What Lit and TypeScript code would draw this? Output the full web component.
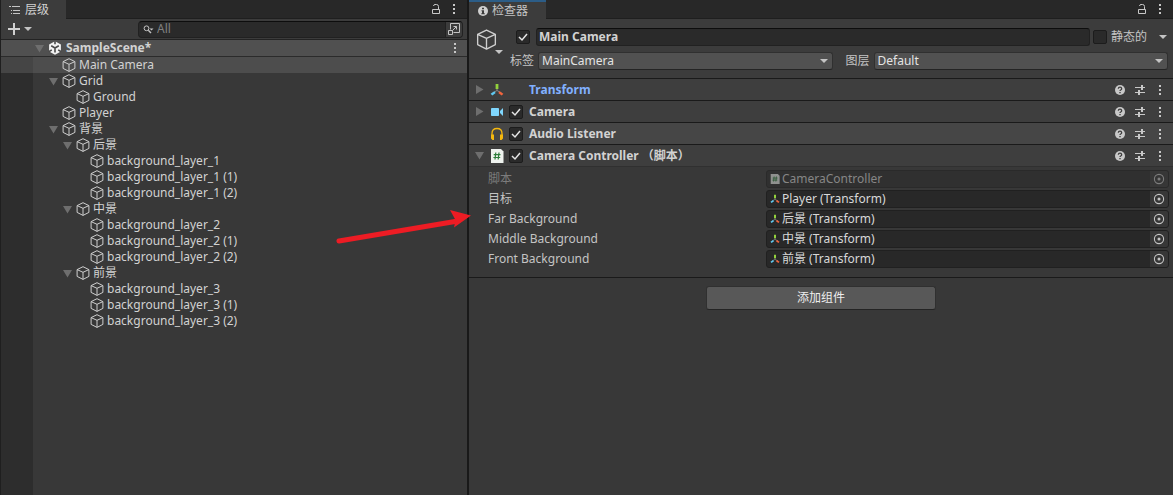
import { LitElement, html, svg, css, nothing } from "lit";
import { customElement, property } from "lit/decorators.js";

const base = css`
  :host {
    display: block;
    font: 12px/16px "Noto Sans", "Noto Sans CJK SC", sans-serif;
    color: #c4c4c4;
  }
  * { box-sizing: border-box; }
  svg { display: block; flex: none; }
  button, input, select {
    font: inherit;
    color: inherit;
    margin: 0;
    padding: 0;
    border: 0;
    background: none;
    min-width: 0;
  }
  .icon-button { display: grid; place-items: center; flex: none; }
  .tab-bar {
    display: flex;
    height: 19px;
    background: #282828;
    border-bottom: 1px solid #1f1f1f;
  }
  .tab {
    display: flex;
    align-items: center;
    height: 19px;
    background: #3c3c3c;
  }
  .tab-tools { display: flex; margin-left: auto; padding-right: 5px; }
  .tab-tools .icon-button { width: 17px; height: 18px; }
`;

const icons = {
  kebab: html`<svg width="4" height="12" viewBox="0 0 4 12" fill="#c8c8c8"><path d="M1 1h2v2H1zM1 5h2v2H1zM1 9h2v2H1z"/></svg>`,
  lock: html`<svg width="9" height="12" viewBox="0 0 9 12" fill="none" stroke="#c8c8c8"><path d="M.500 6.500h7v4h-7zM6.500 6V3.500Q6.500 1.500 4.500 1.500H3Q1.700 1.500 1.500 3"/></svg>`,
  list: html`<svg width="12" height="10" viewBox="0 0 12 10" fill="#c4c4c4"><path d="M3 1h8v1H3zM4 5h7v1H4zM4 8h7v1H4zM0 1h2v1H0zM2 5h1v1H2zM2 8h1v1H2z"/></svg>`,
  info: html`<svg width="10" height="10" viewBox="0 0 10 10"><circle cx="5" cy="5" r="5" fill="#d0d0d0"/><path d="M4 1.700h2v1.500H4zM3.500 4.200H6v3h.800v1H3.300v-1H4V5.200h-.500z" fill="#3c3c3c"/></svg>`,
  plus: html`<svg width="12" height="12" viewBox="0 0 12 12" fill="#d0d0d0"><path d="M5 0h2v5h5v2H7v5H5V7H0V5h5z"/></svg>`,
  caret: html`<svg width="8" height="4" viewBox="0 0 8 4" fill="#c4c4c4"><path d="M0 0h8L4 4z"/></svg>`,
  search: html`<svg width="11" height="9" viewBox="0 0 11 9" fill="none" stroke="#c4c4c4"><circle cx="3.500" cy="3.300" r="2.400"/><path d="M5.300 5.200 8 8" stroke-width="1.400"/><path d="M6.500 3.500h4L8.500 5.500z" fill="#c4c4c4" stroke="none"/></svg>`,
  popout: html`<svg width="14" height="14" viewBox="0 0 14 14" fill="none" stroke="#c4c4c4"><path d="M3.500 7.500V1.500h9v9H6.500M1.500 8.500h4v4h-4zM5.500 8.500 9.500 4.500M6.500 4.500h3v3"/></svg>`,
  help: html`<svg width="10" height="10" viewBox="0 0 10 10"><circle cx="5" cy="5" r="5" fill="#c8c8c8"/><path d="M3.300 3.800Q3.400 2.200 5 2.200T6.700 3.700Q6.700 4.500 5.700 5 5 5.400 5 6.100" fill="none" stroke="#3e3e3e" stroke-width="1.300"/><path d="M4.300 7h1.400v1.300H4.300z" fill="#3e3e3e"/></svg>`,
  sliders: html`<svg width="10" height="10" viewBox="0 0 10 10" fill="#c8c8c8"><path d="M0 2h6V0h2v2h2v1H8v2H6V3H0zM0 7h3V5h2v2h5v1H5v2H3V8H0z"/></svg>`,
  target: html`<svg width="12" height="12" viewBox="0 0 12 12"><circle cx="6" cy="6" r="4.600" fill="none" stroke="#c4c4c4" stroke-width="1.100"/><circle cx="6" cy="6" r="1.500" fill="#c4c4c4"/></svg>`,
  unity: html`<svg width="14" height="14" viewBox="0 0 14 14"><path d="M7 .300 12.900 3.600v6.800L7 13.700 1.100 10.400V3.600z" fill="#f2f2f2"/><path d="M7 7V11.500M7 7 3.200 4.800M7 7l3.800-2.200" stroke="#4a4a4a" stroke-width="1.600"/><path d="M7 0v3.300M.800 10.700l3-1.800M13.200 10.700l-3-1.800" stroke="#4a4a4a" stroke-width="1.600"/></svg>`,
  camera: html`<svg width="14" height="14" viewBox="0 0 14 14" fill="#7fd6fd"><rect x="1" y="3" width="8" height="8" rx=".8"/><path d="M10 6 13 3v8l-3-3z"/></svg>`,
  audio: html`<svg width="14" height="14" viewBox="0 0 14 14"><path d="M2 9V6.500Q2 1.500 7 1.500T12 6.500V9" fill="none" stroke="#f5b80f" stroke-width="1.300"/><path d="M1 7.500h3V13H2.500L1 11.500zM13 7.500h-3V13h1.500L13 11.500z" fill="#f5b80f"/></svg>`,
};

const cube = (size: number) => html`
  <svg width=${size} height=${size} viewBox="0 0 14 14" fill="none" stroke="#cfcfcf" stroke-width=${size > 16 ? 0.9 : 1} stroke-linejoin="round">
    <path d="M7 .700 12.900 3.600V10.400L7 13.400 1.100 10.400V3.600zM1.100 3.600 7 6.300l5.900-2.700M7 6.300v7.100"/>
  </svg>`;

const transform = (size: number) => html`
  <svg width=${size} height=${size} viewBox="0 0 14 14">
    <path d="M7 7.500 2.500 10M7 7.500l4.500 2.500M7 7.500V5" stroke="#888" stroke-width="1"/>
    <path d="M5.600 1h2.800v5H5.600z" fill="#92d13c"/>
    <path d="M4.300 8.300 5.700 10 2.300 12.500.600 10.800z" fill="#5fc8f0"/>
    <path d="M9.700 8.300 13.400 10.800 11.700 12.500 8.300 10z" fill="#f2643c"/>
  </svg>`;

const script = (size: number) => html`
  <svg width=${size} height=${size} viewBox="0 0 14 14">
    <path d="M1 0h10l2.500 2.500V14H1z" fill="#eef2ee"/>
    <path d="M5.800 3.500 5 10.500M9 3.500 8.200 10.500M3.700 5.700h6.800M3.400 8.500h6.800" stroke="#2d7d3a" stroke-width="1.200"/>
  </svg>`;

const foldout = (open: boolean) => html`
  <svg width="9" height="9" viewBox="0 0 9 9" fill="#6e6e6e">
    ${open ? svg`<path d="M0 1h9L4.500 8.500z"/>` : svg`<path d="M1 0v9L8.500 4.500z"/>`}
  </svg>`;

interface Node { name: string; level: number; open?: boolean; selected?: boolean }

const nodes: Node[] = [
  { name: "Main Camera", level: 1, selected: true },
  { name: "Grid", level: 1, open: true },
  { name: "Ground", level: 2 },
  { name: "Player", level: 1 },
  { name: "背景", level: 1, open: true },
  { name: "后景", level: 2, open: true },
  { name: "background_layer_1", level: 3 },
  { name: "background_layer_1 (1)", level: 3 },
  { name: "background_layer_1 (2)", level: 3 },
  { name: "中景", level: 2, open: true },
  { name: "background_layer_2", level: 3 },
  { name: "background_layer_2 (1)", level: 3 },
  { name: "background_layer_2 (2)", level: 3 },
  { name: "前景", level: 2, open: true },
  { name: "background_layer_3", level: 3 },
  { name: "background_layer_3 (1)", level: 3 },
  { name: "background_layer_3 (2)", level: 3 },
];

@customElement("hierarchy-panel")
export class HierarchyPanel extends LitElement {
  static styles = [base, css`
    :host {
      display: flex;
      flex-direction: column;
      background: #383838;
      border-left: 1px solid #1f1f1f;
      color: #d2d2d2;
    }
    .tab { padding: 0 17px 0 8px; gap: 4px; }
    .toolbar {
      display: flex;
      align-items: center;
      height: 21px;
      padding-left: 7px;
      padding-right: 4px;
      background: #3c3c3c;
      border-bottom: 1px solid #232323;
    }
    .add { display: flex; align-items: center; gap: 4px; }
    .search {
      display: flex;
      align-items: center;
      flex: 1;
      height: 17px;
      margin-left: 106px;
      border: 1px solid #212121;
      border-top-color: #0d0d0d;
      border-radius: 4px;
      background: #2a2a2a;
      overflow: hidden;
    }
    .search svg { margin-left: 4px; }
    .search input { flex: 1; padding-left: 3px; height: 15px; }
    .search input::placeholder { color: #808080; opacity: 1; }
    .search .icon-button { width: 17px; height: 15px; background: #3c3c3c; border-left: 1px solid #212121; }
    .search .icon-button svg { margin: 0; }
    .tree {
      flex: 1;
      margin: 0;
      padding: 0;
      list-style: none;
      background: linear-gradient(90deg, #2d2d2d 32px, transparent 32px);
    }
    .row { display: flex; align-items: center; height: 16px; padding-right: 10px; }
    .scene {
      height: 17px;
      padding-left: 33px;
      background: #505050;
      border-bottom: 1px solid #2b2b2b;
      font-weight: 700;
    }
    .scene .name { padding-left: 4px; }
    .selected { background: linear-gradient(90deg, #454545 32px, #4d4d4d 32px); }
    .fold { width: 14px; flex: none; display: grid; place-items: center start; padding-left: 1px; }
    .name { padding-left: 3px; white-space: nowrap; }
    .more { margin-left: auto; }
  `];

  render() {
    return html`
      <div class="tab-bar">
        <div class="tab">${icons.list}<span>层级</span></div>
        <div class="tab-tools">
          <button class="icon-button" aria-label="锁定">${icons.lock}</button>
          <button class="icon-button" aria-label="菜单">${icons.kebab}</button>
        </div>
      </div>
      <div class="toolbar">
        <button class="add" aria-label="创建">${icons.plus}${icons.caret}</button>
        <div class="search">
          ${icons.search}
          <input type="text" placeholder="All" aria-label="搜索" />
          <button class="icon-button" aria-label="在窗口中打开">${icons.popout}</button>
        </div>
      </div>
      <div class="row scene">
        <button class="fold" aria-label="折叠">${foldout(true)}</button>
        ${icons.unity}<span class="name">SampleScene*</span>
        <button class="icon-button more" aria-label="场景菜单">${icons.kebab}</button>
      </div>
      <ul class="tree">
        ${nodes.map((n) => html`
          <li class="row ${n.selected ? "selected" : ""}" style="padding-left:${33 + n.level * 14}px">
            ${n.open ? html`<button class="fold" aria-label="折叠">${foldout(true)}</button>` : html`<span class="fold"></span>`}
            ${cube(14)}<span class="name">${n.name}</span>
          </li>`)}
      </ul>`;
  }
}

@customElement("component-header")
export class ComponentHeader extends LitElement {
  @property() label = "";
  @property() kind = "";
  @property() fold = "closed";
  @property({ type: Boolean }) toggle = false;

  static styles = [base, css`
    :host { border-bottom: 1px solid #1a1a1a; background: #3e3e3e; }
    :host([kind="audio"]) { background: #464646; }
    :host([fold="open"]) { border-bottom-color: #303030; }
    .header { display: flex; align-items: center; height: 21px; padding: 0 8px 0 6px; }
    .fold { width: 15px; flex: none; padding: 0; display: grid; place-items: center start; }
    .check { width: 14px; height: 14px; margin: 0 6px 0 5px; flex: none; }
    .title { font-weight: 700; color: #d2d2d2; white-space: pre; }
    .link { color: #81b0ff; }
    .tools { display: flex; margin-left: auto; align-items: center; gap: 10px; }
    .tools .icon-button { width: 10px; }
    .check input {
      display: block;
      appearance: none;
      width: 14px;
      height: 14px;
      border: 1px solid #1c1c1c;
      border-radius: 2px;
      background: #2a2a2a url("data:image/svg+xml,%3Csvg xmlns='http://www.w3.org/2000/svg' viewBox='0 0 12 12'%3E%3Cpath d='M2 6l3 3 5-6' fill='none' stroke='%23e4e4e4' stroke-width='1.500'/%3E%3C/svg%3E");
    }
  `];

  render() {
    const icon = { transform: transform(14), camera: icons.camera, audio: icons.audio, script: script(14) }[this.kind];
    return html`
      <div class="header">
        ${this.fold === "none"
          ? html`<span class="fold"></span>`
          : html`<button class="fold" aria-label="折叠">${foldout(this.fold === "open")}</button>`}
        ${icon}
        <span class="check">${this.toggle ? html`<input type="checkbox" checked aria-label=${this.label} />` : nothing}</span>
        <span class="title ${this.kind === "transform" ? "link" : ""}">${this.label}</span>
        <span class="tools">
          <button class="icon-button" aria-label="帮助">${icons.help}</button>
          <button class="icon-button" aria-label="预设">${icons.sliders}</button>
          <button class="icon-button" aria-label="菜单">${icons.kebab}</button>
        </span>
      </div>`;
  }
}

const fields = [
  { label: "脚本", value: "CameraController", disabled: true },
  { label: "目标", value: "Player (Transform)" },
  { label: "Far Background", value: "后景 (Transform)" },
  { label: "Middle Background", value: "中景 (Transform)" },
  { label: "Front Background", value: "前景 (Transform)" },
];

@customElement("inspector-panel")
export class InspectorPanel extends LitElement {
  static styles = [base, css`
    :host { background: #383838; }
    .tab { padding: 0 18px 0 9px; gap: 4px; border-top: 2px solid #2c5d87; }
    .object {
      display: flex;
      gap: 7px;
      padding: 9px 5px 8px 7px;
      background: #3c3c3c;
      border-bottom: 1px solid #1a1a1a;
    }
    .object-icon { width: 27px; flex: none; padding-top: 1px; }
    .object-icon .caret { display: flex; justify-content: flex-end; }
    .object-main { flex: 1; min-width: 0; }
    .line { display: flex; align-items: center; height: 18px; }
    .line + .line { margin-top: 6px; }
    .line input[type="checkbox"] {
      appearance: none;
      flex: none;
      width: 14px;
      height: 14px;
      border: 1px solid #1c1c1c;
      border-radius: 2px;
      background: #2a2a2a;
    }
    .line input[type="checkbox"]:checked {
      background: #2a2a2a url("data:image/svg+xml,%3Csvg xmlns='http://www.w3.org/2000/svg' viewBox='0 0 12 12'%3E%3Cpath d='M2 6l3 3 5-6' fill='none' stroke='%23e4e4e4' stroke-width='1.500'/%3E%3C/svg%3E");
    }
    .active { padding: 0 6px; display: flex; }
    .object-name {
      flex: 1;
      height: 18px;
      padding: 0 2px 1px;
      border: 1px solid #212121;
      border-top-color: #0d0d0d;
      border-radius: 3px;
      background: #2a2a2a;
      color: #d2d2d2;
      font-weight: 700;
    }
    .static { display: flex; align-items: center; gap: 4px; padding-left: 3px; }
    .static-menu { padding: 0 1px 0 12px; }
    .picks { display: grid; grid-template-columns: 1fr 1fr; gap: 13px; }
    .pick { display: flex; align-items: center; gap: 4px; min-width: 0; }
    .pick label { flex: none; }
    .select { display: grid; flex: 1; align-items: center; min-width: 0; }
    .select > * { grid-area: 1 / 1; }
    .select svg { justify-self: end; margin-right: 5px; pointer-events: none; }
    .select select {
      appearance: none;
      height: 18px;
      padding: 0 3px;
      border: 1px solid #303030;
      border-bottom-color: #242424;
      border-radius: 3px;
      background: #515151;
      color: #e4e4e4;
    }
    .fields {
      display: grid;
      gap: 2px;
      padding: 3px 4px 9px 19px;
      border-bottom: 1px solid #1a1a1a;
    }
    .field { display: grid; grid-template-columns: minmax(0, 278fr) minmax(0, 403fr); align-items: center; }
    .box {
      display: flex;
      align-items: center;
      height: 18px;
      padding-left: 3px;
      border: 1px solid #202020;
      border-radius: 3px;
      background: #282828;
      color: #d8d8d8;
      overflow: hidden;
    }
    .box input { flex: 1; height: 16px; padding-left: 2px; }
    .box .icon-button { width: 18px; height: 16px; background: #373737; }
    .disabled label { color: #7c7c7c; }
    .disabled .box { background: #303030; border-color: #2a2a2a; color: #868686; }
    .disabled svg { opacity: 0.5; }
    .footer { display: flex; justify-content: center; padding: 8px 0; }
    .add-component {
      width: 230px;
      height: 24px;
      border: 1px solid #303030;
      border-bottom-color: #242424;
      border-radius: 3px;
      background: #585858;
      color: #eee;
    }
  `];

  render() {
    return html`
      <div class="tab-bar">
        <div class="tab">${icons.info}<span>检查器</span></div>
        <div class="tab-tools">
          <button class="icon-button" aria-label="锁定">${icons.lock}</button>
          <button class="icon-button" aria-label="菜单">${icons.kebab}</button>
        </div>
      </div>
      <div class="object">
        <div class="object-icon">${cube(21)}<span class="caret">${icons.caret}</span></div>
        <div class="object-main">
          <div class="line">
            <span class="active"><input type="checkbox" checked aria-label="启用" /></span>
            <input class="object-name" type="text" aria-label="名称" .value=${"Main Camera"} />
            <span class="static"><input id="static" type="checkbox" /><label for="static">静态的</label></span>
            <button class="static-menu" aria-label="静态选项">${icons.caret}</button>
          </div>
          <div class="line picks">
            <span class="pick"><label for="tag">标签</label>
              <span class="select"><select id="tag"><option>MainCamera</option></select>${icons.caret}</span></span>
            <span class="pick"><label for="layer">图层</label>
              <span class="select"><select id="layer"><option>Default</option></select>${icons.caret}</span></span>
          </div>
        </div>
      </div>
      <component-header label="Transform" kind="transform"></component-header>
      <component-header label="Camera" kind="camera" toggle></component-header>
      <component-header label="Audio Listener" kind="audio" fold="none" toggle></component-header>
      <component-header label="Camera Controller （脚本）" kind="script" fold="open" toggle></component-header>
      <div class="fields">
        ${fields.map((f, i) => html`
          <div class="field ${f.disabled ? "disabled" : ""}">
            <label for="field-${i}">${f.label}</label>
            <span class="box">
              ${f.disabled ? script(10) : transform(10)}
              <input id="field-${i}" type="text" readonly ?disabled=${f.disabled} .value=${f.value} />
              <button class="icon-button" aria-label="选择对象">${icons.target}</button>
            </span>
          </div>`)}
      </div>
      <div class="footer"><button class="add-component">添加组件</button></div>`;
  }
}

@customElement("app-root")
export class AppRoot extends LitElement {
  static styles = css`
    :host { display: block; }
    .window {
      position: relative;
      display: grid;
      grid-template-columns: minmax(0, 469fr) minmax(0, 704fr);
      min-height: 100vh;
      background: #383838;
    }
    .left { display: grid; border-right: 2px solid #191919; }
    .arrow { position: absolute; left: 335px; top: 207px; pointer-events: none; }
  `;

  render() {
    return html`
      <div class="window">
        <div class="left"><hierarchy-panel></hierarchy-panel></div>
        <inspector-panel></inspector-panel>
        <svg class="arrow" width="137" height="38" viewBox="0 0 137 38" fill="#ed1c24">
          <path d="M4 34 120 14.500" stroke="#ed1c24" stroke-width="5" stroke-linecap="round"/>
          <path d="M115 3 136 8.500 119 20.500 120.500 13z"/>
        </svg>
      </div>`;
  }
}
